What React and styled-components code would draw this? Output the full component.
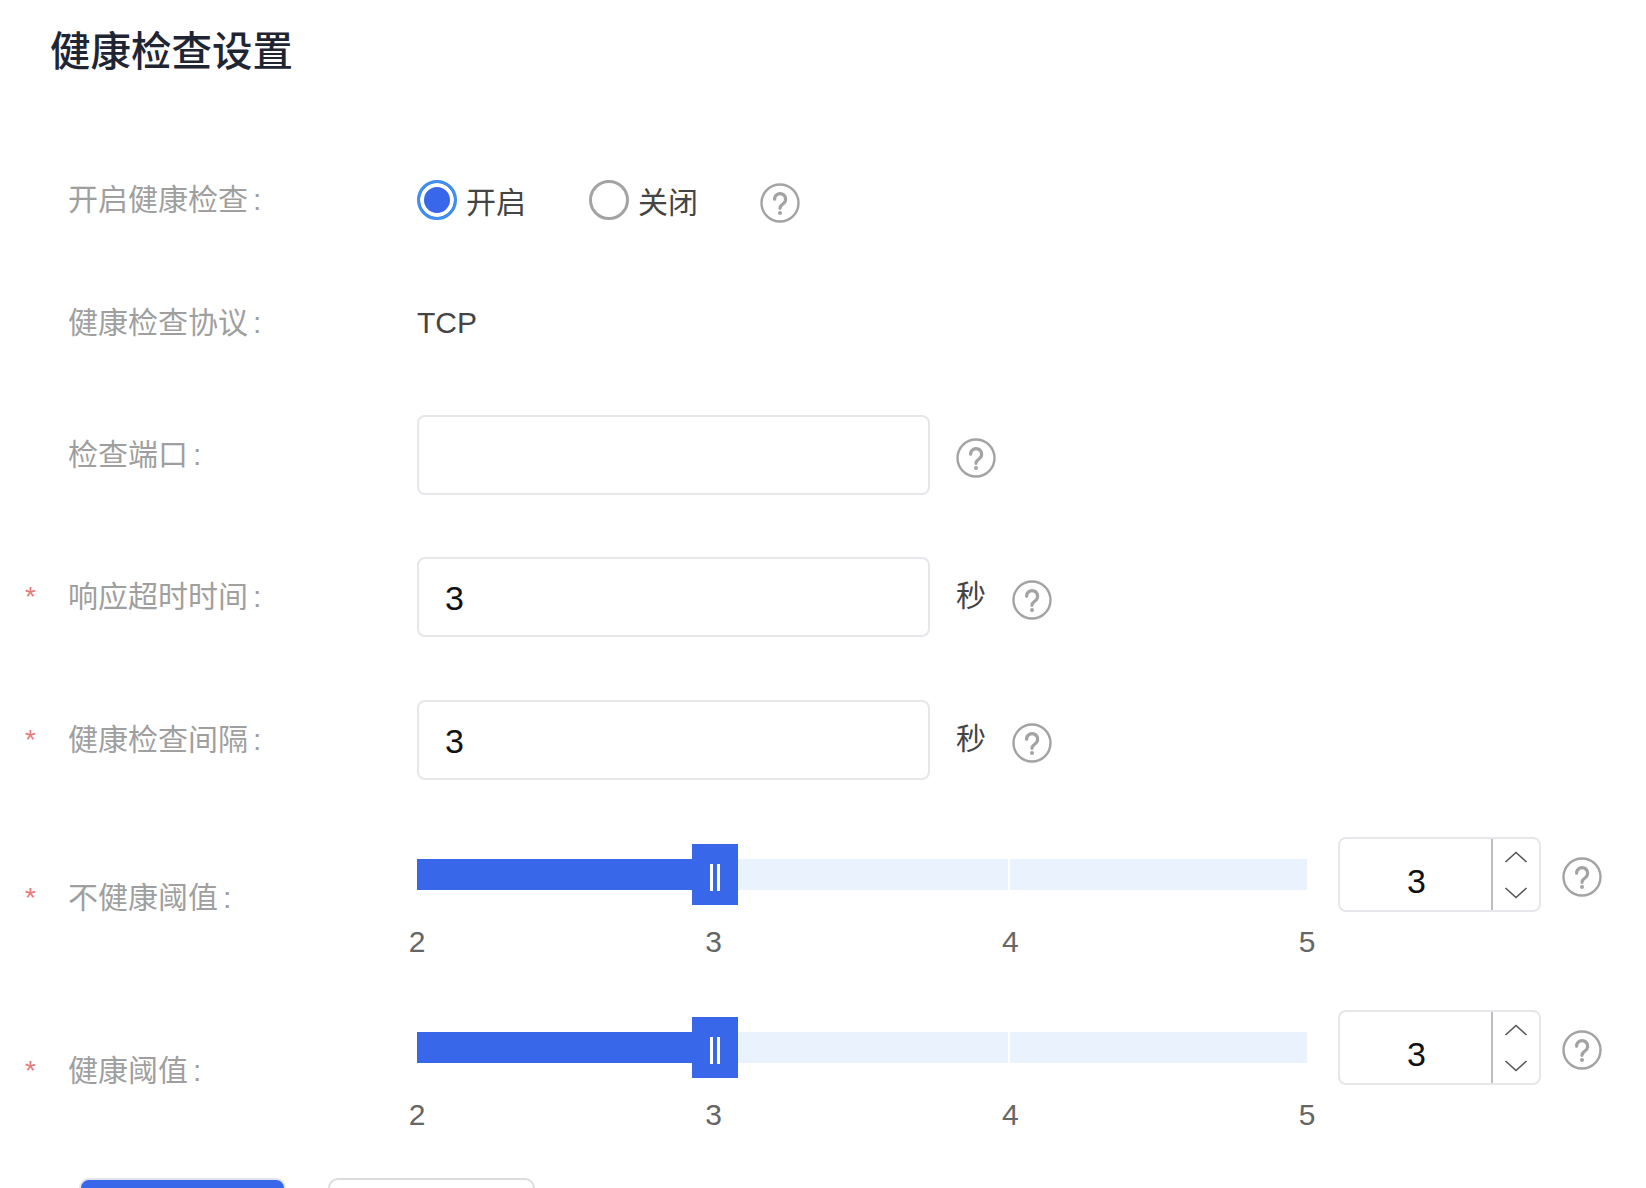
import styled, { createGlobalStyle } from "styled-components";

const GlobalStyle = createGlobalStyle`
  html, body {
    margin: 0;
    padding: 0;
    height: 100%;
    overflow: hidden;
    background: #fff;
  }
  * {
    box-sizing: border-box;
  }
`;

const FONT = `"Liberation Sans", "Noto Sans CJK SC", sans-serif`;

const HelpIcon = ({ className }) => (
  <svg className={className} width="40" height="40" viewBox="0 0 40 40" fill="none">
    <circle cx="20" cy="20" r="18.5" stroke="#a3a3a3" strokeWidth="2.4" />
    <path
      d="M14.6 16.2a5.5 5.5 0 1 1 8.6 4.5c-2 1.4-3.2 2.4-3.2 4.6"
      stroke="#a3a3a3"
      strokeWidth="3.2"
      strokeLinecap="round"
    />
    <circle cx="20" cy="30" r="2" fill="#a3a3a3" />
  </svg>
);

const Chevron = ({ up }) => (
  <svg width="24" height="12" viewBox="0 0 24 12" fill="none">
    <path
      d={up ? "M1.5 11 12 1.5 22.500 11" : "M1.500 1 12 10.500 22.500 1"}
      stroke="#555"
      strokeWidth="1.6"
    />
  </svg>
);

const Slider = ({ value, min, max }) => {
  const percent = ((value - min) / (max - min)) * 100;
  const marks = [];
  for (let i = min; i <= max; i++) marks.push(i);
  return (
    <SliderWrap>
      <Track>
        {marks.slice(1, -1).map((m) => (
          <TrackGap key={m} style={{ left: `${((m - min) / (max - min)) * 100}%` }} />
        ))}
        <TrackFill style={{ width: `${percent}%` }} />
        <Handle style={{ left: `${percent}%` }}>
          <Grip />
          <Grip />
        </Handle>
      </Track>
      <Marks>
        {marks.map((m) => (
          <Mark key={m}>{m}</Mark>
        ))}
      </Marks>
    </SliderWrap>
  );
};

const Stepper = ({ value }) => (
  <StepperBox>
    <StepperValue>{value}</StepperValue>
    <StepperArrows>
      <Chevron up />
      <Chevron />
    </StepperArrows>
  </StepperBox>
);

const ThresholdRow = ({ label, top }) => (
  <SliderRow $top={top}>
    <SliderLabel>
      <Star>*</Star>
      {label}
      <Colon>:</Colon>
    </SliderLabel>
    <Slider value={3} min={2} max={5} />
    <Stepper value={3} />
    <SliderHelp />
  </SliderRow>
);

export default function App() {
  return (
    <Page>
      <GlobalStyle />
      <Title>健康检查设置</Title>

      <Row $top={107}>
        <Label $plain>
          开启健康检查<Colon>:</Colon>
        </Label>
        <Radio $checked />
        <RadioText>开启</RadioText>
        <Radio />
        <RadioText>关闭</RadioText>
        <RadioHelp />
      </Row>

      <Row $top={83}>
        <Label $plain>
          健康检查协议<Colon>:</Colon>
        </Label>
        <PlainValue>TCP</PlainValue>
      </Row>

      <Row $top={72} $tall>
        <Label $plain>
          检查端口<Colon>:</Colon>
        </Label>
        <Input />
        <InputHelp />
      </Row>

      <Row $top={62} $tall>
        <Label>
          <Star>*</Star>响应超时时间<Colon>:</Colon>
        </Label>
        <Input>3</Input>
        <Unit>秒</Unit>
        <InputHelp />
      </Row>

      <Row $top={63} $tall>
        <Label>
          <Star>*</Star>健康检查间隔<Colon>:</Colon>
        </Label>
        <Input>3</Input>
        <Unit>秒</Unit>
        <InputHelp />
      </Row>

      <ThresholdRow label="不健康阈值" top={58} />
      <ThresholdRow label="健康阈值" top={0} />

      <Buttons>
        <Button $primary aria-label="confirm" />
        <Button aria-label="cancel" />
      </Buttons>
    </Page>
  );
}

const Page = styled.div`
  width: 1646px;
  height: 1188px;
  overflow: hidden;
  padding-top: 32px;
  font-family: ${FONT};
`;

const Title = styled.h1`
  margin: 0 0 0 50px;
  font-size: 40.5px;
  line-height: 41px;
  font-weight: 500;
  color: #1f2533;
`;

const Row = styled.div`
  display: flex;
  align-items: center;
  height: ${(p) => (p.$tall ? "80px" : "40px")};
  margin-top: ${(p) => p.$top}px;
`;

const Label = styled.div`
  display: flex;
  flex: 0 0 417px;
  padding-left: ${(p) => (p.$plain ? "68px" : "25px")};
  font-size: 30px;
  line-height: 40px;
  color: #9f9f9f;
`;

const Colon = styled.span`
  margin-left: 5px;
`;

const Star = styled.span`
  flex: 0 0 43px;
  font-size: 28px;
  line-height: 40px;
  color: #e77a7a;
`;

const Radio = styled.span`
  flex: none;
  width: 40px;
  height: 40px;
  border-radius: 50%;
  border: ${(p) => (p.$checked ? "3px solid #3f8ef0" : "3px solid #a3a3a3")};
  background: ${(p) => (p.$checked ? "#3867ea" : "#fff")};
  box-shadow: ${(p) => (p.$checked ? "inset 0 0 0 4px #fff" : "none")};
`;

const RadioText = styled.span`
  flex: none;
  width: 123px;
  margin: 6px 0 0 9px;
  font-size: 30px;
  line-height: 40px;
  color: #444;
`;

const RadioHelp = styled(HelpIcon)`
  flex: none;
  margin: 6px 0 0 -1px;
`;

const PlainValue = styled.span`
  font-size: 30px;
  line-height: 40px;
  color: #444;
`;

const Input = styled.div`
  flex: none;
  width: 513px;
  height: 80px;
  padding-left: 26px;
  border: 2px solid #e6e7ea;
  border-radius: 8px;
  background: #fff;
  font-size: 34px;
  line-height: 78px;
  color: #111;
`;

const Unit = styled.span`
  margin-left: 26px;
  font-size: 30px;
  line-height: 40px;
  color: #444;
  transform: translateY(-1px);
`;

const InputHelp = styled(HelpIcon)`
  flex: none;
  margin: 6px 0 0 26px;
`;

const SliderRow = styled.div`
  display: flex;
  align-items: flex-start;
  height: 115px;
  margin-top: ${(p) => p.$top}px;
  margin-bottom: 58px;
`;

const SliderLabel = styled(Label)`
  margin-top: 40px;
`;

const SliderWrap = styled.div`
  flex: 0 0 890px;
  padding-top: 21px;
`;

const Track = styled.div`
  position: relative;
  height: 31px;
  background: #eaf2fd;
`;

const TrackGap = styled.span`
  position: absolute;
  top: 0;
  bottom: 0;
  width: 2px;
  margin-left: -2px;
  background: #fff;
`;

const TrackFill = styled.div`
  height: 100%;
  background: #3867ea;
`;

const Handle = styled.div`
  position: absolute;
  top: -15px;
  width: 46px;
  height: 61px;
  margin-left: -22px;
  display: flex;
  justify-content: center;
  align-items: center;
  gap: 4px;
  padding-top: 6px;
  background: #3867ea;
`;

const Grip = styled.span`
  width: 3px;
  height: 27px;
  background: #fff;
`;

const Marks = styled.div`
  display: flex;
  justify-content: space-between;
  margin-top: 34px;
`;

const Mark = styled.span`
  display: flex;
  justify-content: center;
  width: 0;
  font-size: 30px;
  line-height: 36px;
  color: #666;
`;

const StepperBox = styled.div`
  flex: none;
  display: flex;
  width: 203px;
  height: 75px;
  margin: -1px 0 0 31px;
  border: 2px solid #e6e7ea;
  border-radius: 8px;
`;

const StepperValue = styled.div`
  flex: none;
  width: 153px;
  padding-top: 7px;
  padding-left: 2px;
  border-right: 2px solid #bdbdbd;
  text-align: center;
  font-size: 34px;
  line-height: 71px;
  color: #111;
`;

const StepperArrows = styled.div`
  flex: 1;
  display: flex;
  flex-direction: column;
  align-items: center;
  justify-content: space-between;
  padding: 12px 0 11px;
`;

const SliderHelp = styled(HelpIcon)`
  flex: none;
  margin: 19px 0 0 21px;
`;

const Buttons = styled.div`
  display: flex;
  gap: 42px;
  margin: -6px 0 0 79px;
`;

const Button = styled.button`
  width: 207px;
  height: 80px;
  padding: 0;
  border: 2px solid ${(p) => (p.$primary ? "#dfe3ea" : "#dcdcdc")};
  border-radius: 10px;
  background: ${(p) => (p.$primary ? "#3867ea" : "#fff")};
`;
